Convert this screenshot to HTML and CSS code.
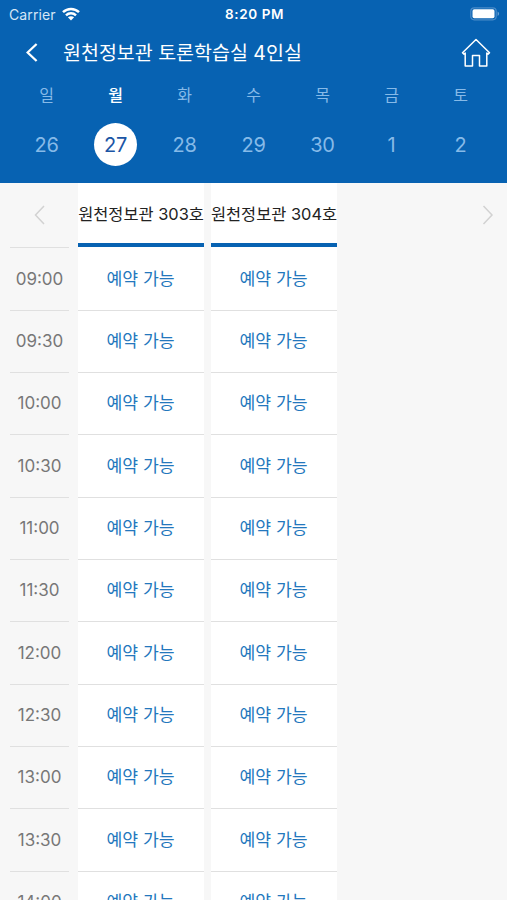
FILE: index.html
```html
<!DOCTYPE html>
<html lang="ko">
<head>
<meta charset="utf-8">
<title>원천정보관 토론학습실 4인실</title>
<link rel="stylesheet" href="styles.css">
</head>
<body>
<header class="header">
  <div class="status">
    <div class="carrier"><span>Carrier</span>
      <svg class="wifi" width="18" height="14" viewBox="0 0 18 14" fill="none" stroke="#fff" stroke-width="2.5"><path d="M1 5.2C5.5.9 12.500.9 17 5.200M4 8.300C6.800 5.700 11.200 5.700 14 8.300"/><path d="M9 13.500 5.900 10.300C7.600 8.800 10.400 8.800 12.100 10.300Z" fill="#fff" stroke="none"/></svg>
    </div>
    <span class="clock">8:20 PM</span>
    <svg class="battery" width="31" height="14" viewBox="0 0 31 14"><rect x="1.800" y=".8" width="25.400" height="12" rx="3.500" fill="none" stroke="#4a8bc8" stroke-width="1.200"/><rect x="3.500" y="2.300" width="22" height="9" rx="1.800" fill="#fff"/><path d="M28.600 4.600c2 .8 2 3.600 0 4.400z" fill="#6ba1d3"/></svg>
  </div>
  <div class="titlebar">
    <svg class="back" width="12" height="20" viewBox="0 0 12 20" fill="none" stroke="#fff" stroke-width="2.300"><path d="M10.600 1 1.600 9.500l9 8.500"/></svg>
    <h1 class="title">원천정보관 토론학습실 4인실</h1>
    <svg class="home" width="30" height="30" viewBox="0 0 30 30" fill="none" stroke="#fff" stroke-width="1.500" stroke-linejoin="round"><path d="M15 1.500 1.500 14.700 2.800 16.100 4.200 15V28H11.500V17.500H18.500V28H25.800V15L27.200 16.100 28.500 14.700Z"/></svg>
  </div>
  <div class="week">
    <div class="day"><span class="name">일</span><span class="date">26</span></div>
    <div class="day selected"><span class="name">월</span><span class="date">27</span></div>
    <div class="day"><span class="name">화</span><span class="date">28</span></div>
    <div class="day"><span class="name">수</span><span class="date">29</span></div>
    <div class="day"><span class="name">목</span><span class="date">30</span></div>
    <div class="day"><span class="name">금</span><span class="date">1</span></div>
    <div class="day"><span class="name">토</span><span class="date">2</span></div>
  </div>
</header>
<main class="schedule">
  <div class="times">
    <div class="top"><svg width="12" height="20" viewBox="0 0 12 20" fill="none" stroke="#d2d2d2" stroke-width="1.500"><path d="M10 1 1.500 10l8.500 9"/></svg></div>
    <div class="cell">09:00</div><div class="cell">09:30</div><div class="cell">10:00</div><div class="cell">10:30</div><div class="cell">11:00</div><div class="cell">11:30</div><div class="cell">12:00</div><div class="cell">12:30</div><div class="cell">13:00</div><div class="cell">13:30</div><div class="cell">14:00</div>
  </div>
  <div class="room">
    <div class="top"><span>원천정보관 303호</span></div>
    <div class="cell">예약 가능</div><div class="cell">예약 가능</div><div class="cell">예약 가능</div><div class="cell">예약 가능</div><div class="cell">예약 가능</div><div class="cell">예약 가능</div><div class="cell">예약 가능</div><div class="cell">예약 가능</div><div class="cell">예약 가능</div><div class="cell">예약 가능</div><div class="cell">예약 가능</div>
  </div>
  <div class="room">
    <div class="top"><span>원천정보관 304호</span></div>
    <div class="cell">예약 가능</div><div class="cell">예약 가능</div><div class="cell">예약 가능</div><div class="cell">예약 가능</div><div class="cell">예약 가능</div><div class="cell">예약 가능</div><div class="cell">예약 가능</div><div class="cell">예약 가능</div><div class="cell">예약 가능</div><div class="cell">예약 가능</div><div class="cell">예약 가능</div>
  </div>
  <div class="next"><svg width="12" height="20" viewBox="0 0 12 20" fill="none" stroke="#d2d2d2" stroke-width="1.500"><path d="M1.500 1 10 10l-8.500 9"/></svg></div>
</main>
</body>
</html>
```
FILE: styles.css
```css
* { box-sizing: border-box; }
body {
  margin: 0;
  height: 900px;
  overflow: hidden;
  display: flex;
  flex-direction: column;
  background: #f7f7f7;
  font-family: Inter, "Noto Sans CJK KR", sans-serif;
}
svg { display: block; flex: none; }
.header { flex: none; height: 183px; background: #0762b2; color: #fff; }
.status {
  height: 27px;
  padding: 0 7px 0 9px;
  display: grid;
  grid-template-columns: 1fr auto 1fr;
  align-items: center;
  font-size: 14px;
  line-height: 27px;
}
.carrier { display: flex; align-items: center; gap: 6px; color: #d5e6f6; letter-spacing: .1px; }
.clock { padding-top: 1px; font-size: 13.500px; font-weight: 600; letter-spacing: .6px; }
.battery { justify-self: end; }
.titlebar { height: 51px; padding: 0 16px 0 26px; display: flex; align-items: center; }
.title {
  flex: 1;
  margin: 0 0 0 25px;
  font-size: 19.500px;
  font-weight: 400;
  line-height: 28px;
  white-space: nowrap;
}
.week { display: grid; grid-template-columns: repeat(7, 69px); padding-left: 12px; }
.day { display: flex; flex-direction: column; align-items: center; color: #86bae8; }
.name { height: 34px; line-height: 34px; font-size: 16px; }
.date {
  width: 43px;
  height: 43px;
  margin-top: 11px;
  border-radius: 50%;
  line-height: 45px;
  text-align: center;
  font-size: 20px;
  letter-spacing: -.3px;
}
.selected .name { color: #fff; font-weight: 500; }
.selected .date { background: #fff; color: #1b55a5; }
.schedule { flex: 1; min-height: 0; display: flex; padding-left: 10px; }
.times { width: 59px; margin-right: 9px; color: #777; font-size: 17px; }
.room { width: 126px; margin-right: 7px; color: #2377bd; font-size: 17.200px; background: #fff; }
.top { height: 65.400px; display: flex; align-items: center; justify-content: center; }
.times .top { padding-bottom: 1px; border-bottom: 1px solid #e0e0e0; }
.room .top {
  height: 63.600px;
  margin-bottom: 1.800px;
  border-bottom: 4px solid #0762b2;
  color: #222;
  font-size: 16.400px;
  white-space: nowrap;
}
.cell {
  height: 62.330px;
  display: flex;
  align-items: center;
  justify-content: center;
  border-bottom: 1px solid #e0e0e0;
}
.times .cell { padding-bottom: .5px; }
.room .cell { padding: 0 1px 3.500px 0; }
.next { flex: 1; height: 63px; display: flex; align-items: center; justify-content: flex-end; padding-right: 13px; }
```
